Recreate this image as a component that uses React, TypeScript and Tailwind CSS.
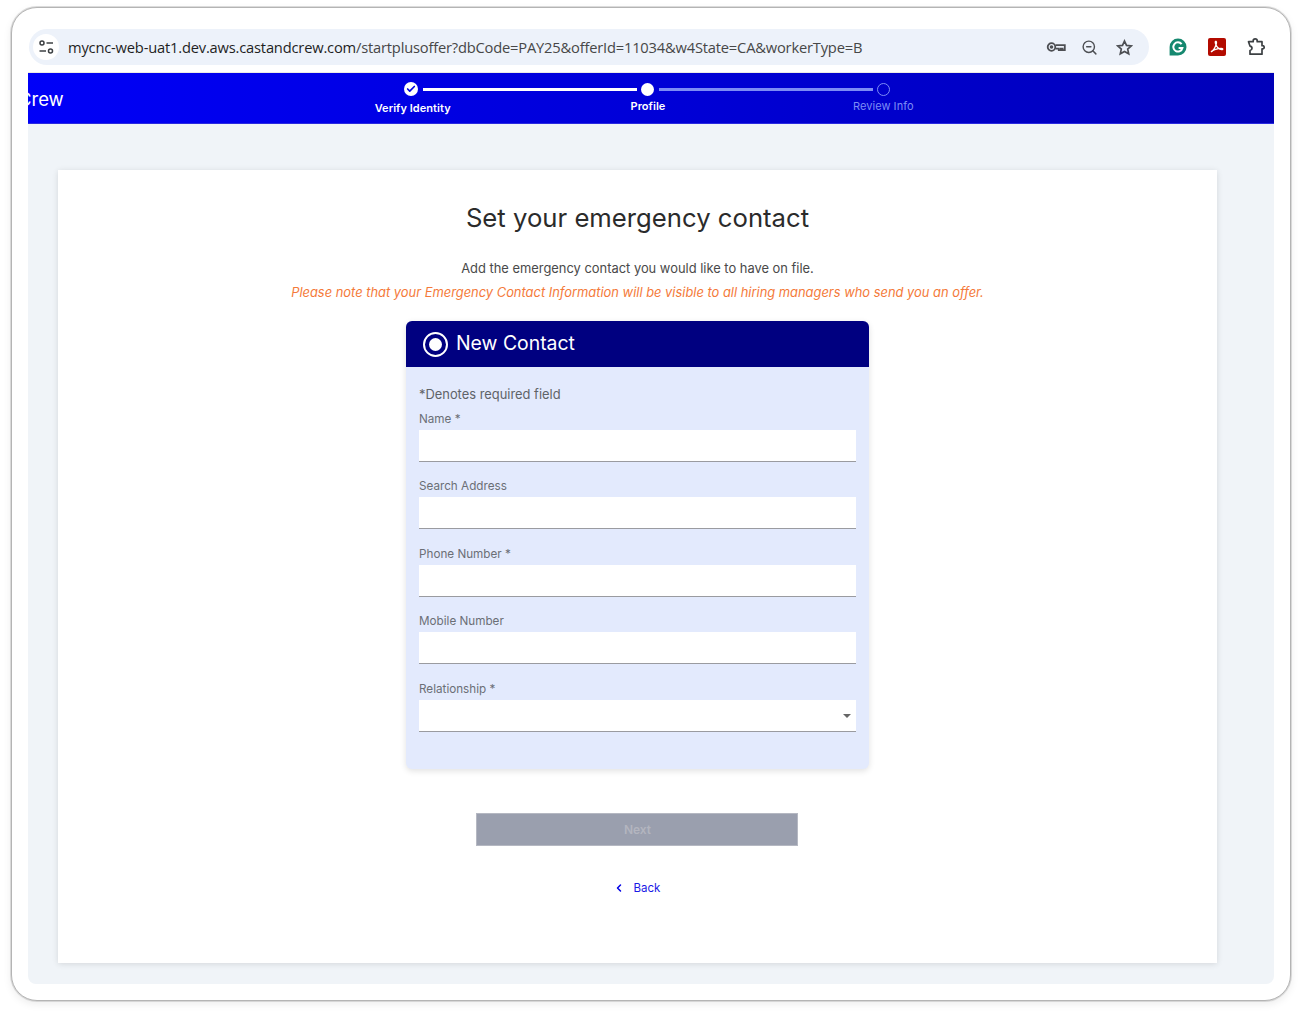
import React from 'react';
import { Check, ChevronLeft, ZoomOut } from 'lucide-react';

const fields = [
  { label: 'Name *' },
  { label: 'Search Address' },
  { label: 'Phone Number *' },
  { label: 'Mobile Number' },
];

const TuneIcon = () => (
  <svg width="15" height="14" viewBox="0 0 15 14" fill="none" stroke="#3c4043" strokeWidth="1.5">
    <circle cx="3" cy="3" r="2" />
    <path d="M7.500 3h6.500" />
    <circle cx="11.500" cy="11" r="2" />
    <path d="M.5 11h6.500" />
  </svg>
);

const KeyIcon = () => (
  <svg width="20" height="12" viewBox="0 0 20 12" fill="none" stroke="#4d4f53" strokeWidth="1.8">
    <circle cx="5.5" cy="6" r="3.8" />
    <circle cx="5.5" cy="6" r="0.9" fill="#4d4f53" />
    <path d="M9.500 4.200h9.300v5h-2.200v-1.600h-1.800v1.600h-2v-1.600h-3.300" />
  </svg>
);

const StarIcon = () => (
  <svg width="17" height="17" viewBox="0 0 17 17" fill="none" stroke="#4d4f53" strokeWidth="1.700">
    <path d="M8.500 2l2 4.400 4.800.5-3.600 3.200 1 4.700-4.200-2.400-4.200 2.400 1-4.700-3.600-3.200 4.800-.5z" />
  </svg>
);

const GrammarlyIcon = () => (
  <svg width="18" height="18" viewBox="0 0 18 18">
    <path d="M9 .5a8.500 8.500 0 1 1 0 17H.6V9A8.400 8.400 0 0 1 9 .5z" fill="#15886f" />
    <path d="M12.600 6.200A4.600 4.600 0 1 0 13.400 10H9.600" fill="none" stroke="#fff" strokeWidth="2" />
  </svg>
);

const AcrobatIcon = () => (
  <svg width="18" height="18" viewBox="0 0 18 18">
    <rect width="18" height="18" rx="2" fill="#b30b00" />
    <path d="M3 14c2-1 4-4 5.300-8 .4-1.500.1-3-.6-2.800-.8.200-.5 2 .3 3.800 1 2 2.500 3.600 3.800 4.200 1.300.5 3.200.5 3-.3-.2-.7-2-.7-4.300-.3-2.500.4-5 1.300-6.500 2.500z" fill="none" stroke="#fff" strokeWidth="1.300" />
  </svg>
);

const PuzzleIcon = () => (
  <svg width="18" height="18" viewBox="0 0 18 18" fill="none" stroke="#3c4043" strokeWidth="1.700" strokeLinejoin="round">
    <path d="M1.500 3.700h4.700V2.900a2 2 0 0 1 4 0v.8h4.800v4h.6a1.600 1.600 0 0 1 0 3.200H15v5.300H3v-3.700c1.700-.3 2-1.200 2-2.200s-.6-2-2-2.200z" />
  </svg>
);

const Field = ({ label, select }: { label: string; select?: boolean }) => (
  <div className="mb-[15.5px]">
    <label className="block h-[20px] text-[11.7px] leading-[18px] text-[#6b6f76]">{label}</label>
    <div className="relative h-[32px] bg-white border-b border-[#9a9ba0]">
      {select && (
        <span className="absolute right-[5px] top-[14px] w-0 h-0 border-x-[4px] border-x-transparent border-t-[4px] border-t-[#666]" />
      )}
    </div>
  </div>
);

export default function App() {
  return (
    <div className="w-[1302px] h-[1016px] bg-white pt-[7px] pl-[11px] overflow-hidden font-['Inter',sans-serif]">
      <div className="w-[1280px] h-[994px] rounded-[26px] border border-[#b4b4b4] bg-white shadow-[0_0_0_1px_rgba(188,188,188,0.5),0_3px_8px_rgba(0,0,0,0.08)] px-[16px]">
        {/* browser toolbar */}
        <div className="h-[65px] flex items-center pt-[14px] border-b border-[#ecebe6]">
          <div className="ml-[1px] w-[1120px] h-[36px] rounded-full bg-[#edf2fa] flex items-center pl-[4px] pr-[16px]">
            <div className="w-[26px] h-[26px] rounded-full bg-white flex items-center justify-center shrink-0">
              <TuneIcon />
            </div>
            <span className="ml-[9px] pt-[1px] text-[14.7px] tracking-[-0.19px] text-[#1f1f1f] font-['Open_Sans',sans-serif] whitespace-nowrap">
              mycnc-web-uat1.dev.aws.castandcrew.com<span className="text-[#474747]">/startplusoffer?dbCode=PAY25&amp;offerId=11034&amp;w4State=CA&amp;workerType=B</span>
            </span>
            <div className="ml-auto flex items-center">
              <KeyIcon />
              <span className="ml-[15px]"><ZoomOut size={17} color="#4d4f53" strokeWidth={2} /></span>
              <span className="ml-[18px]"><StarIcon /></span>
            </div>
          </div>
          <div className="ml-[20px] flex items-center gap-[21px]">
            <GrammarlyIcon />
            <AcrobatIcon />
            <PuzzleIcon />
          </div>
        </div>

        {/* blue header */}
        <div className="h-[51px] flex overflow-hidden bg-gradient-to-r from-[#0000f8] to-[#0000b8] border-b border-[#2a2ae0]">
          <div className="w-[265px] shrink-0 overflow-hidden">
            <span className="block -ml-[10px] mt-[13px] text-[18.5px] leading-[26px] text-white">Crew</span>
          </div>
          <div className="w-[708px] pt-[8px]">
            <div className="flex items-center h-[16px] pl-[111px]">
              <span className="w-[14px] h-[14px] rounded-full bg-white flex items-center justify-center shrink-0">
                <Check size={10} color="#0000e0" strokeWidth={4} />
              </span>
              <span className="ml-[5px] w-[214px] h-[3px] bg-white" />
              <span className="ml-[4px] w-[13px] h-[13px] rounded-full bg-white shrink-0" />
              <span className="ml-[5px] w-[214px] h-[3px] bg-[#7d8cf5]" />
              <span className="ml-[4px] w-[13px] h-[13px] rounded-full border border-[#7d8cf5] shrink-0" />
            </div>
            <div className="grid grid-cols-3 ml-[2px] mt-[1px] text-center text-[11px] tracking-[0.05px] leading-[14px]">
              <span className="mt-[3px] font-semibold text-white">Verify Identity</span>
              <span className="mt-[1px] font-semibold text-white">Profile</span>
              <span className="mt-[1px] text-[#7d8cf5]">Review Info</span>
            </div>
          </div>
        </div>

        {/* page */}
        <div className="h-[860px] bg-[#f0f4f8] rounded-b-[8px] pt-[46px] pl-[30px] pr-[57px]">
          <div className="h-[793px] bg-white shadow-[0_1px_6px_rgba(0,0,0,0.12)] pt-[32px] flex flex-col items-center">
            <h1 className="text-[25.7px] leading-[32px] text-[#2b2b2b]">Set your emergency contact</h1>
            <p className="mt-[25px] text-[12.9px] leading-[20px] text-[#4a4a4a]">Add the emergency contact you would like to have on file.</p>
            <p className="mt-[4px] text-[12.9px] leading-[20px] italic text-[#f47a3a]">
              Please note that your Emergency Contact Information will be visible to all hiring managers who send you an offer.
            </p>

            <div className="mt-[18px] w-[463px] h-[448px] rounded-[6px] bg-[#e3eafd] shadow-[0_2px_6px_rgba(0,0,0,0.12)]">
              <div className="h-[46px] rounded-t-[6px] bg-[#000080] flex items-center pl-[17px]">
                <span className="w-[25px] h-[25px] rounded-full border-[2.5px] border-white flex items-center justify-center">
                  <span className="w-[13px] h-[13px] rounded-full bg-white" />
                </span>
                <span className="ml-[8px] text-[19.4px] text-white">New Contact</span>
              </div>
              <div className="px-[13px] pt-[18px]">
                <p className="text-[12.9px] leading-[20px] text-[#5f6368] mb-[4.75px]">*Denotes required field</p>
                {fields.map((f) => (
                  <Field key={f.label} label={f.label} />
                ))}
                <Field label="Relationship *" select />
              </div>
            </div>

            <button className="mt-[44px] mr-[2px] pl-[2px] w-[322px] h-[33px] bg-[#9a9fae] border border-[#b5b8c2] text-[12px] font-semibold text-[#b3b5bf]">Next</button>
            <a className="mt-[34px] mr-[2px] flex items-center text-[11.5px] leading-[16px] text-[#1a1ae6]">
              <ChevronLeft size={12} strokeWidth={3} color="#0000e6" />
              <span className="ml-[9px]">Back</span>
            </a>
          </div>
        </div>
      </div>
    </div>
  );
}
